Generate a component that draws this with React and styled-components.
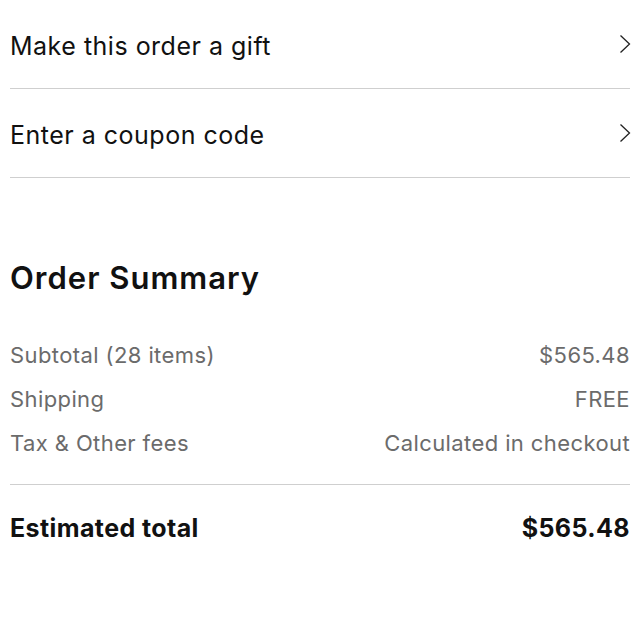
import React from "react";
import styled, { createGlobalStyle } from "styled-components";

const Global = createGlobalStyle`
  body {
    margin: 0;
    background: #ffffff;
    font-family: "Inter", "Liberation Sans", sans-serif;
    color: #111111;
  }
`;

export default function App() {
  const lines = [
    { label: "Subtotal (28 items)", value: "$565.48" },
    { label: "Shipping", value: "FREE" },
    { label: "Tax & Other fees", value: "Calculated in checkout" },
  ];

  return (
    <Page>
      <Global />
      <LinkRow>
        <LinkText>Make this order a gift</LinkText>
        <Chevron />
      </LinkRow>
      <LinkRow>
        <LinkText>Enter a coupon code</LinkText>
        <Chevron />
      </LinkRow>

      <Summary>
        <Title>Order Summary</Title>
        <Lines>
          {lines.map((line) => (
            <Line key={line.label}>
              <span>{line.label}</span>
              <span>{line.value}</span>
            </Line>
          ))}
        </Lines>
        <Total>
          <span>Estimated total</span>
          <span>$565.48</span>
        </Total>
      </Summary>
    </Page>
  );
}

function Chevron() {
  return (
    <ChevronIcon width="12" height="20" viewBox="0 0 12 20">
      <path d="M1.5 1.5 L10.5 10 L1.5 18.5" fill="none" stroke="#222" strokeWidth="1.3" />
    </ChevronIcon>
  );
}

const Page = styled.div`
  padding: 0 10px;
  width: 640px;
  box-sizing: border-box;
`;

const LinkRow = styled.div`
  display: flex;
  align-items: center;
  justify-content: space-between;
  height: 88px;
  border-bottom: 1.5px solid #cfcfcf;
`;

const LinkText = styled.span`
  font-size: 25px;
  letter-spacing: 0.5px;
  padding-top: 3px;
`;

const ChevronIcon = styled.svg`
  display: block;
  margin-right: -1px;
`;

const Summary = styled.div`
  padding-top: 80px;
`;

const Title = styled.h2`
  margin: 0;
  font-size: 31px;
  font-weight: 600;
  letter-spacing: 1px;
  line-height: 40px;
`;

const Lines = styled.div`
  display: flex;
  flex-direction: column;
  gap: 14px;
  padding: 42px 0 26px;
  border-bottom: 1.5px solid #cfcfcf;
`;

const Line = styled.div`
  display: flex;
  justify-content: space-between;
  font-size: 22px;
  letter-spacing: 0.4px;
  line-height: 30px;
  color: #6b6b6b;
`;

const Total = styled.div`
  display: flex;
  justify-content: space-between;
  padding-top: 27px;
  font-size: 25px;
  font-weight: 700;
  letter-spacing: 0.4px;
  line-height: 32px;
`;
